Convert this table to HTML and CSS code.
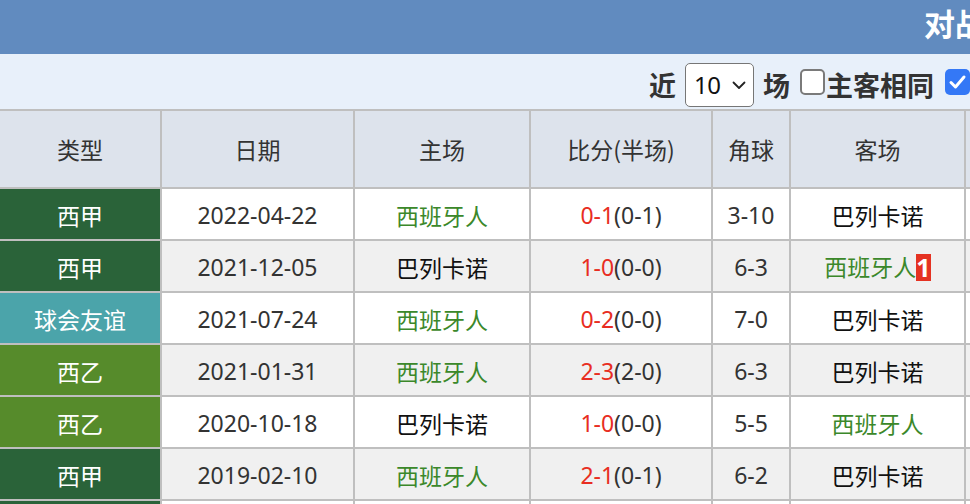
FILE: index.html
```html
<!DOCTYPE html>
<html lang="zh-CN">
<head>
<meta charset="utf-8">
<title>对战往绩</title>
<link rel="stylesheet" href="styles.css">
</head>
<body>
<div class="wrap">
  <div class="titlebar"><span class="title">对战往绩</span></div>
  <div class="options">
    <span class="opt-label">近</span>
    <div class="select"><span class="sel-val">10</span><svg class="chev" width="14" height="9" viewBox="0 0 14 9"><path d="M1.5 1.5 L7 7 L12.5 1.5" fill="none" stroke="#222" stroke-width="1.8" stroke-linecap="round" stroke-linejoin="round"/></svg></div>
    <span class="opt-label">场</span>
    <span class="chk"></span><span class="opt-label tight">主客相同</span>
    <span class="chk checked"><svg width="25" height="26" viewBox="0 0 25 26"><path d="M6 13.5 L10.5 18 L19 8" fill="none" stroke="#fff" stroke-width="3" stroke-linecap="round" stroke-linejoin="round"/></svg></span>
  </div>
  <table class="grid">
    <colgroup>
      <col class="c1"><col class="c2"><col class="c3"><col class="c4"><col class="c5"><col class="c6"><col class="c7">
    </colgroup>
    <thead>
      <tr><th>类型</th><th>日期</th><th>主场</th><th>比分(半场)</th><th>角球</th><th>客场</th><th></th></tr>
    </thead>
    <tbody>
      <tr>
        <td class="lg laliga">西甲</td><td class="num">2022-04-22</td><td class="team home">西班牙人</td>
        <td class="num"><span class="red">0-1</span>(0-1)</td><td class="num">3-10</td><td class="team">巴列卡诺</td><td></td>
      </tr>
      <tr class="alt">
        <td class="lg laliga">西甲</td><td class="num">2021-12-05</td><td class="team">巴列卡诺</td>
        <td class="num"><span class="red">1-0</span>(0-0)</td><td class="num">6-3</td><td class="team home">西班牙人<span class="badge">1</span></td><td></td>
      </tr>
      <tr>
        <td class="lg friendly">球会友谊</td><td class="num">2021-07-24</td><td class="team home">西班牙人</td>
        <td class="num"><span class="red">0-2</span>(0-0)</td><td class="num">7-0</td><td class="team">巴列卡诺</td><td></td>
      </tr>
      <tr class="alt">
        <td class="lg segunda">西乙</td><td class="num">2021-01-31</td><td class="team home">西班牙人</td>
        <td class="num"><span class="red">2-3</span>(2-0)</td><td class="num">6-3</td><td class="team">巴列卡诺</td><td></td>
      </tr>
      <tr>
        <td class="lg segunda">西乙</td><td class="num">2020-10-18</td><td class="team">巴列卡诺</td>
        <td class="num"><span class="red">1-0</span>(0-0)</td><td class="num">5-5</td><td class="team home">西班牙人</td><td></td>
      </tr>
      <tr class="alt">
        <td class="lg laliga">西甲</td><td class="num">2019-02-10</td><td class="team home">西班牙人</td>
        <td class="num"><span class="red">2-1</span>(0-1)</td><td class="num">6-2</td><td class="team">巴列卡诺</td><td></td>
      </tr>
      <tr>
        <td class="lg laliga"></td><td></td><td></td><td></td><td></td><td></td><td></td>
      </tr>
    </tbody>
  </table>
</div>
</body>
</html>
```

FILE: styles.css
```css
html, body {
  margin: 0;
  padding: 0;
  overflow: hidden;
  background: #fff;
}
body {
  font-family: "Noto Sans", "Noto Sans CJK SC", sans-serif;
  color: #333;
}
.wrap {
  width: 1976px;
}
.titlebar {
  height: 54px;
  background: #618bbf;
  display: flex;
  justify-content: center;
  align-items: flex-start;
}
.title {
  font-family: "Noto Sans CJK SC", sans-serif;
  font-weight: 700;
  font-size: 31px;
  line-height: 31px;
  margin-top: 7px;
  margin-left: -4px;
  color: #fff;
}
.options {
  height: 55px;
  background: #e8f0fa;
  display: flex;
  align-items: center;
  padding-left: 649px;
  padding-top: 6px;
  box-sizing: border-box;
}
.opt-label {
  font-family: "Noto Sans CJK SC", sans-serif;
  font-weight: 700;
  font-size: 27px;
  line-height: 30px;
  color: #333;
  margin-right: 9px;
}
.opt-label.tight {
  margin-left: 1px;
  margin-right: 10px;
}
.select {
  width: 69px;
  height: 44px;
  box-sizing: border-box;
  border: 1px solid #767676;
  border-radius: 5px;
  background: #fff;
  display: flex;
  align-items: center;
  padding-left: 8px;
  margin-right: 9px;
}
.sel-val {
  font-family: "Noto Sans", sans-serif;
  font-size: 24px;
  line-height: 28px;
  color: #111;
  letter-spacing: -0.5px;
}
.chev {
  margin-left: 12px;
  margin-top: 1px;
}
.chk {
  width: 25px;
  height: 26px;
  box-sizing: border-box;
  border: 2px solid #7a7a7a;
  border-radius: 5px;
  background: #fff;
  margin-left: 1px;
  margin-top: -5px;
  display: inline-flex;
}
.chk.checked {
  border: 0;
  background: #3478f6;
}
.grid {
  border-collapse: separate;
  border-spacing: 0;
  table-layout: fixed;
  width: 1166px;
  border-top: 2px solid #bfbfbf;
}
.c1 { width: 162px; }
.c2 { width: 193px; }
.c3 { width: 176px; }
.c4 { width: 182px; }
.c5 { width: 78px; }
.c6 { width: 175px; }
.c7 { width: 200px; }
.grid th, .grid td {
  border-right: 2px solid #bfbfbf;
  border-bottom: 2px solid #bfbfbf;
  padding: 0;
  text-align: center;
  vertical-align: middle;
  white-space: nowrap;
  overflow: hidden;
  font-size: 23px;
  line-height: 28px;
  box-sizing: border-box;
}
.grid th {
  height: 78px;
  background: #dde3ec;
  font-family: "Noto Sans CJK SC", sans-serif;
  font-weight: 400;
  color: #333;
  padding-top: 0;
}
.grid td {
  height: 52px;
  background: #fff;
  color: #333;
  padding-top: 1px;
}
.grid tr.alt td {
  background: #f0f0f0;
}
.grid td.lg {
  color: #fff;
  font-family: "Noto Sans CJK SC", sans-serif;
}
.grid tr td.laliga { background: #2a6339; }
.grid tr td.friendly { background: #4ba4aa; }
.grid tr td.segunda { background: #568b2b; }
.grid td.num {
  font-family: "Noto Sans", sans-serif;
}
.grid td.team {
  font-family: "Noto Sans CJK SC", sans-serif;
  color: #111;
}
.grid td.team.home {
  color: #3b882a;
}
.red {
  color: #e82d22;
}
.badge {
  display: inline-block;
  background: #e53222;
  color: #fff;
  font-family: "Noto Sans", sans-serif;
  font-weight: 700;
  font-size: 25px;
  line-height: 27px;
  height: 27px;
  padding: 0;
  text-align: center;
  vertical-align: -1px;
  margin-left: 0;
}
```
